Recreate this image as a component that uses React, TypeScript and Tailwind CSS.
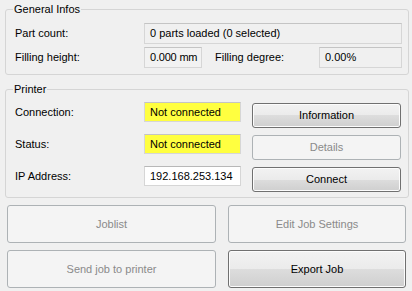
const Field = ({
  children,
  className = "",
}: {
  children: React.ReactNode;
  className?: string;
}) => (
  <div
    className={`flex items-center h-[21px] pl-[5px] border border-[#d6d6d6] border-t-[#c4c4c4] ${className}`}
  >
    {children}
  </div>
);

const Btn = ({
  label,
  disabled,
  className = "",
}: {
  label: string;
  disabled?: boolean;
  className?: string;
}) =>
  disabled ? (
    <button className={`flex items-center justify-center rounded-[3px] border border-[#adb2b5] bg-[#f4f4f4] text-[#8a8a8a] ${className}`}>
      {label}
    </button>
  ) : (
    <button
      className={`flex items-center justify-center rounded-[3px] border border-[#707070] shadow-[inset_0_0_0_1px_#fcfcfc] bg-[linear-gradient(#f2f2f2_0%,#ebebeb_50%,#dddddd_50%,#cfcfcf_100%)] text-black ${className}`}
    >
      {label}
    </button>
  );

const App = () => {
  return (
    <div className="w-[412px] h-[291px] bg-[#f0f0f0] text-[11px] leading-[13px] text-black font-['Liberation_Sans',Arial,sans-serif] pt-[3px] overflow-hidden">
      <fieldset className="ml-[5px] w-[404px] border border-[#d5d5d5] rounded-[3px] px-[9px] pr-[5px] pb-[6px]">
        <legend className="ml-[-2px] px-[1px] leading-[13px]">General Infos</legend>
        <div className="mt-[7px] flex items-center">
          <span className="w-[129px]">Part count:</span>
          <Field className="w-[258px] bg-[#f0f0f0]">0 parts loaded (0 selected)</Field>
        </div>
        <div className="mt-[3px] flex items-center">
          <span className="w-[129px]">Filling height:</span>
          <Field className="w-[58px] bg-[#f2f2f2] tracking-[-0.2px]">0.000 mm</Field>
          <span className="ml-[13px] w-[104px]">Filling degree:</span>
          <Field className="w-[83px] bg-[#f0f0f0]">0.00%</Field>
        </div>
      </fieldset>

      <fieldset className="mt-[8px] ml-[5px] w-[404px] border border-[#d5d5d5] rounded-[3px] px-[9px] pr-[7px] pb-[5px]">
        <legend className="ml-[-2px] px-[1px] leading-[13px]">Printer</legend>
        <div className="mt-[6px] flex">
          <div className="flex flex-col gap-[12px]">
            <div className="flex items-center">
              <span className="w-[129px]">Connection:</span>
              <div className="flex items-center h-[20px] w-[97px] pl-[5px] bg-[#ffff40] border border-[#d6d6d6] border-t-[#c4c4c4]">
                Not connected
              </div>
            </div>
            <div className="flex items-center">
              <span className="w-[129px]">Status:</span>
              <div className="flex items-center h-[20px] w-[97px] pl-[5px] bg-[#ffff40] border border-[#d6d6d6] border-t-[#c4c4c4]">
                Not connected
              </div>
            </div>
            <div className="flex items-center">
              <span className="w-[129px]">IP Address:</span>
              <div className="flex items-center h-[20px] w-[97px] pl-[5px] bg-white border border-[#d6d6d6] border-t-[#b8b8b8]">
                192.168.253.134
              </div>
            </div>
          </div>
          <div className="ml-[11px] mt-[1px] flex flex-col gap-[7px]">
            <Btn label="Information" className="w-[149px] h-[25px]" />
            <Btn label="Details" disabled className="w-[149px] h-[25px]" />
            <Btn label="Connect" className="w-[149px] h-[25px]" />
          </div>
        </div>
      </fieldset>

      <div className="mt-[7px] ml-[7px] flex flex-col gap-[7px]">
        <div className="flex gap-[12px]">
          <Btn label="Joblist" disabled className="w-[209px] h-[38px]" />
          <Btn label="Edit Job Settings" disabled className="w-[178px] h-[38px]" />
        </div>
        <div className="flex gap-[12px]">
          <Btn label="Send job to printer" disabled className="w-[209px] h-[38px]" />
          <Btn label="Export Job" className="w-[178px] h-[38px]" />
        </div>
      </div>
    </div>
  );
};

export default App;
